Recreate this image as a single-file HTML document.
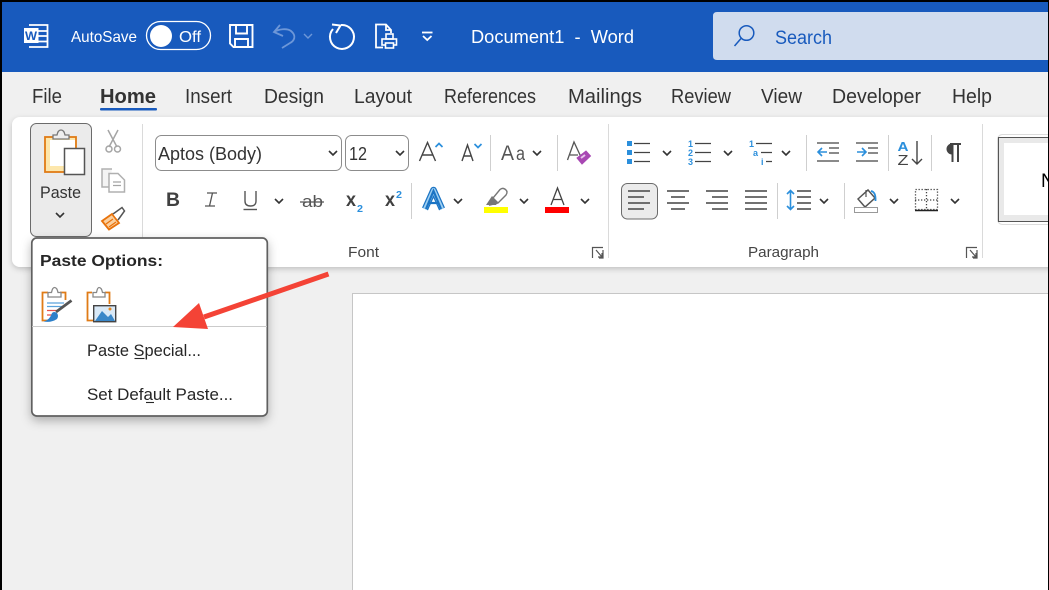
<!DOCTYPE html>
<html><head><meta charset="utf-8"><style>
html,body{margin:0;padding:0;background:#000;width:1049px;height:590px;overflow:hidden}
svg{display:block}
text{font-family:"Liberation Sans",sans-serif;fill:#333}
</style></head><body>
<svg width="1049" height="590" viewBox="0 0 1049 590" xmlns="http://www.w3.org/2000/svg">
<defs>
<filter id="sh" x="-10%" y="-10%" width="120%" height="125%"><feDropShadow dx="0" dy="2" stdDeviation="3" flood-color="#000" flood-opacity=".2"/></filter>
<filter id="sh2" x="-15%" y="-15%" width="130%" height="135%"><feDropShadow dx="0" dy="4" stdDeviation="5" flood-color="#000" flood-opacity=".28"/></filter>
<path id="ch" d="M-4 -2L0 2L4 -2" fill="none" stroke="#333" stroke-width="1.600"/>
</defs>
<rect x="0" y="0" width="1049" height="590" fill="#000"/>
<rect x="2" y="2" width="1046" height="588" fill="#f0f0f0"/>
<rect x="2" y="2" width="1046" height="70" fill="#185abd"/>

<!-- Word icon -->
<path d="M29 25H47.500V47H29" fill="none" stroke="#fff" stroke-width="1.800"/>
<path d="M38 31H47M38 36H47M38 41.500H47" stroke="#fff" stroke-width="1.800"/>
<rect x="24" y="28" width="14.500" height="15" fill="#fff"/>
<text x="25" y="40" font-size="12" font-weight="bold" style="fill:#185abd" textLength="12" lengthAdjust="spacingAndGlyphs">W</text>

<text x="71" y="42" font-size="16" style="fill:#fff" textLength="66" lengthAdjust="spacingAndGlyphs">AutoSave</text>
<rect x="146.500" y="21.500" width="64" height="28" rx="14" fill="none" stroke="#fff" stroke-width="1.300"/>
<circle cx="161" cy="36" r="11" fill="#fff"/>
<text x="179" y="42" font-size="16" style="fill:#fff" textLength="22" lengthAdjust="spacingAndGlyphs">Off</text>

<!-- Save -->
<path d="M230 25H252.500V47H233.500L230 43.500Z" fill="none" stroke="#fff" stroke-width="1.900"/>
<path d="M236 25V33.500H247V25M235 47V39H248V47" fill="none" stroke="#fff" stroke-width="1.900"/>
<!-- Undo -->
<path d="M280 25L274 32L283 36M274 32C279 29 287 28 291 31C297 36 294 41 290 43L282 48" fill="none" stroke="#6d97d8" stroke-width="1.800"/>
<path d="M304 34L308 38L312 34" fill="none" stroke="#6d97d8" stroke-width="1.400"/>
<!-- Redo -->
<path d="M333 29A12 12 0 1 0 341 25" fill="none" stroke="#fff" stroke-width="2"/>
<path d="M332 24.500L340.500 25.500L336 33" fill="none" stroke="#fff" stroke-width="2"/>
<!-- Print preview -->
<path d="M383 47.500H376V24.500H386L391 30V33M386 24.500V30H391" fill="none" stroke="#fff" stroke-width="1.800"/>
<rect x="386" y="34" width="7" height="5" fill="none" stroke="#fff" stroke-width="1.600"/>
<rect x="382" y="39" width="14.500" height="6" fill="none" stroke="#fff" stroke-width="1.600"/>
<rect x="385.500" y="43" width="8" height="5" fill="#185abd" stroke="#fff" stroke-width="1.600"/>
<!-- QAT more -->
<path d="M422 32.500H432.500" stroke="#fff" stroke-width="1.800"/>
<path d="M423 36L427.250 40L431.500 36" fill="none" stroke="#fff" stroke-width="1.800"/>

<text x="471" y="43" font-size="18" style="fill:#fff;white-space:pre" xml:space="preserve" textLength="163" lengthAdjust="spacingAndGlyphs">Document1  -  Word</text>

<!-- Search -->
<path d="M717 12H1048V60H717Q713 60 713 56V16Q713 12 717 12Z" fill="#d0dcee"/>
<circle cx="746.500" cy="33" r="7.300" fill="none" stroke="#185abd" stroke-width="1.500"/>
<path d="M741 38.500L734.500 46" stroke="#185abd" stroke-width="1.500"/>
<text x="775" y="44" font-size="19" style="fill:#185abd" textLength="57" lengthAdjust="spacingAndGlyphs">Search</text>

<!-- Tabs -->
<g font-size="20">
<text x="32" y="103" textLength="30" lengthAdjust="spacingAndGlyphs">File</text>
<text x="100" y="103" font-weight="bold" textLength="56" lengthAdjust="spacingAndGlyphs">Home</text>
<text x="185" y="103" textLength="47" lengthAdjust="spacingAndGlyphs">Insert</text>
<text x="264" y="103" textLength="60" lengthAdjust="spacingAndGlyphs">Design</text>
<text x="354" y="103" textLength="58" lengthAdjust="spacingAndGlyphs">Layout</text>
<text x="444" y="103" textLength="92" lengthAdjust="spacingAndGlyphs">References</text>
<text x="568" y="103" textLength="74" lengthAdjust="spacingAndGlyphs">Mailings</text>
<text x="671" y="103" textLength="60" lengthAdjust="spacingAndGlyphs">Review</text>
<text x="761" y="103" textLength="41" lengthAdjust="spacingAndGlyphs">View</text>
<text x="832" y="103" textLength="89" lengthAdjust="spacingAndGlyphs">Developer</text>
<text x="952" y="103" textLength="40" lengthAdjust="spacingAndGlyphs">Help</text>
</g>
<rect x="100" y="108" width="57" height="2.500" rx="1" fill="#185abd"/>

<!-- Document -->
<rect x="352.500" y="293.500" width="720" height="320" fill="#fff" stroke="#c6c6c6"/>

<!-- Ribbon -->
<rect x="12" y="117" width="1050" height="150" rx="8" fill="#fff" filter="url(#sh)"/>

<!-- Paste button -->
<rect x="30.500" y="123.500" width="61" height="113" rx="6" fill="#ebebeb" stroke="#6b6b6b"/>
<rect x="45" y="137" width="31" height="35" fill="#fde7ac" stroke="#e07b16" stroke-width="1.800"/>
<rect x="50" y="140" width="25" height="26" fill="#fff"/>
<path d="M53 139V135H57Q58 130 61 130Q64 130 65 135H69V139Z" fill="#eee" stroke="#777" stroke-width="1.300"/>
<rect x="64.500" y="148.500" width="20" height="26" fill="#fff" stroke="#555" stroke-width="1.500"/>
<text x="40" y="198" font-size="17" textLength="41" lengthAdjust="spacingAndGlyphs">Paste</text>
<use href="#ch" x="60" y="215"/>
<!-- Cut, copy, painter -->
<path d="M108 130L117 147M118 130L109 147" stroke="#a5a5a5" stroke-width="1.500" fill="none"/>
<circle cx="109" cy="149" r="3" fill="none" stroke="#a5a5a5" stroke-width="1.500"/>
<circle cx="117.500" cy="149" r="3" fill="none" stroke="#a5a5a5" stroke-width="1.500"/>
<path d="M109 187H102V169H112" fill="#f4f4f4" stroke="#b0b0b0" stroke-width="1.500"/>
<path d="M109 173.500H118L124.500 180V192H109Z" fill="#fff" stroke="#b0b0b0" stroke-width="1.500"/>
<path d="M113 182H121M113 185.500H121" stroke="#a5a5a5" stroke-width="1.200"/>
<path d="M102 221L112 214L119 223L109 229.500Z" fill="#fbd0a0" stroke="#e8730c" stroke-width="1.800"/>
<path d="M106 224L113 219M109 227L116 222" stroke="#e8730c" stroke-width="1.200"/>
<path d="M113 214L122 207.500L124.500 211L118 220" fill="#fff" stroke="#555" stroke-width="1.500"/>
<path d="M142.500 124V260" stroke="#dadada"/>

<!-- Font group -->
<rect x="155.500" y="135.500" width="186" height="35" rx="6" fill="#fff" stroke="#8c8c8c"/>
<text x="158" y="160" font-size="18" textLength="104" lengthAdjust="spacingAndGlyphs">Aptos (Body)</text>
<use href="#ch" x="333" y="153"/>
<rect x="345.500" y="135.500" width="63" height="35" rx="6" fill="#fff" stroke="#8c8c8c"/>
<text x="349" y="160" font-size="18" textLength="18" lengthAdjust="spacingAndGlyphs">12</text>
<use href="#ch" x="400" y="153"/>

<path d="M419.500 161L427.500 142.500L435.500 161M422.500 155H432.500" fill="none" stroke="#444" stroke-width="1.400"/>
<path d="M435.500 147L439 143.500L442.500 147" fill="none" stroke="#2b8fdc" stroke-width="1.700"/>
<path d="M462 161L467.500 145L473 161M464 156H471" fill="none" stroke="#444" stroke-width="1.400"/>
<path d="M474.500 144L478 147.500L481.500 144" fill="none" stroke="#2b8fdc" stroke-width="1.700"/>
<path d="M490.500 135V171M557.500 135V171" stroke="#cfcfcf"/>
<text x="501" y="160" font-size="21" style="fill:#555" textLength="13" lengthAdjust="spacingAndGlyphs">A</text>
<text x="516" y="160" font-size="19" style="fill:#555" textLength="9" lengthAdjust="spacingAndGlyphs">a</text>
<use href="#ch" x="537" y="153"/>
<path d="M567.500 160L574 142L580.500 156M570 155H578" fill="none" stroke="#555" stroke-width="1.300"/>
<path d="M577 158L586 151L590.500 156L582 164Z" fill="#a847b3" stroke="#a847b3"/>
<path d="M581 158L585 155" stroke="#e8c5ec" stroke-width="2"/>

<text x="166" y="206" font-size="19" font-weight="bold" style="fill:#404040" textLength="14" lengthAdjust="spacingAndGlyphs">B</text>
<path d="M207 193H217M205 206H215M212.500 193L209.500 206" fill="none" stroke="#555" stroke-width="1.300"/>
<path d="M245 191V201Q245 206 250.500 206Q256 206 256 201V191" fill="none" stroke="#555" stroke-width="1.400"/>
<path d="M243.500 209.500H257" stroke="#555" stroke-width="1.400"/>
<use href="#ch" x="279" y="201"/>
<text x="302" y="207" font-size="17" style="fill:#555" textLength="21" lengthAdjust="spacingAndGlyphs">ab</text>
<path d="M300 202H324" stroke="#555" stroke-width="1.200"/>
<text x="346" y="206" font-size="19" font-weight="bold" style="fill:#404040" textLength="10" lengthAdjust="spacingAndGlyphs">x</text>
<text x="357" y="212" font-size="10" font-weight="bold" style="fill:#2b8fdc" textLength="6" lengthAdjust="spacingAndGlyphs">2</text>
<text x="385" y="206" font-size="19" font-weight="bold" style="fill:#404040" textLength="10" lengthAdjust="spacingAndGlyphs">x</text>
<text x="396" y="198" font-size="10" font-weight="bold" style="fill:#2b8fdc" textLength="6" lengthAdjust="spacingAndGlyphs">2</text>
<path d="M411.500 183V219" stroke="#cfcfcf"/>

<path d="M425 209L433.500 190L442 209" fill="none" stroke="#1b74c4" stroke-width="6.500" stroke-linejoin="round"/>
<path d="M425 209L433.500 190L442 209" fill="none" stroke="#9fd0f2" stroke-width="4" stroke-linejoin="round"/>
<path d="M426 209L433.500 191L441 209M428 203H439" fill="none" stroke="#1b74c4" stroke-width="2.200"/>
<use href="#ch" x="458" y="201"/>
<path d="M490 205L493 198L500 189.500Q503 187 506 190Q508 192 506 195L498 203Z" fill="none" stroke="#777" stroke-width="1.400"/>
<path d="M486 205H496L498 202L492 196Z" fill="#777"/>
<rect x="484" y="207" width="24" height="6" fill="#ffff00"/>
<use href="#ch" x="524" y="201"/>
<path d="M551 205L557.500 188L564 205M553.500 199.500H561.500" fill="none" stroke="#444" stroke-width="1.300"/>
<rect x="545" y="207" width="24" height="6" fill="#ff0000"/>
<use href="#ch" x="585" y="201"/>

<text x="348" y="257" font-size="15" style="fill:#444" textLength="31" lengthAdjust="spacingAndGlyphs">Font</text>
<path d="M592.500 258V247.500H603M603 250V258H599M596 250L602 257M602 253V257H598" fill="none" stroke="#555" stroke-width="1.200"/>
<path d="M608.500 124V258" stroke="#dadada"/>

<!-- Paragraph group -->
<g fill="#2b8fdc"><rect x="627" y="141" width="5" height="5"/><rect x="627" y="150" width="5" height="5"/><rect x="627" y="159" width="5" height="5"/></g>
<path d="M634 143.500H650M634 152.500H650M634 161.500H650" stroke="#444" stroke-width="1.300"/>
<use href="#ch" x="667" y="153"/>
<g font-size="9" font-weight="bold" style="fill:#2b8fdc">
<text x="688" y="147" style="fill:#2b8fdc">1</text><text x="688" y="156" style="fill:#2b8fdc">2</text><text x="688" y="165" style="fill:#2b8fdc">3</text>
<text x="749" y="147" style="fill:#2b8fdc">1</text><text x="753" y="156" style="fill:#2b8fdc">a</text><text x="761" y="165" style="fill:#2b8fdc">i</text>
</g>
<path d="M695 143.500H711M695 152.500H711M695 161.500H711" stroke="#444" stroke-width="1.300"/>
<use href="#ch" x="728" y="153"/>
<path d="M756 143.500H772M761 152.500H772M766 161.500H772" stroke="#444" stroke-width="1.300"/>
<use href="#ch" x="786" y="153"/>
<path d="M806.500 135V171M888.500 135V171M931.500 135V171" stroke="#cfcfcf"/>
<path d="M817 143H839M829 148H839M829 153H839M817 161H839" stroke="#444" stroke-width="1.300"/>
<path d="M827 152H818M822 148L818 152L822 156" fill="none" stroke="#2b8fdc" stroke-width="1.600"/>
<path d="M856 143H878M868 148H878M868 153H878M856 161H878" stroke="#444" stroke-width="1.300"/>
<path d="M857 152H866M862 148L866 152L862 156" fill="none" stroke="#2b8fdc" stroke-width="1.600"/>
<text x="897.500" y="151" font-size="13" font-weight="bold" style="fill:#2b8fdc" textLength="11" lengthAdjust="spacingAndGlyphs">A</text>
<text x="897.500" y="165" font-size="15" style="fill:#444" textLength="11" lengthAdjust="spacingAndGlyphs">Z</text>
<path d="M917 141V164M912 159L917 164L922 159" fill="none" stroke="#444" stroke-width="1.400"/>
<path d="M950 144H961M952.500 144V162M958 144V162" fill="none" stroke="#444" stroke-width="2"/>
<path d="M952 144A5 5 0 0 0 952 154Z" fill="#444" stroke="#444"/>

<rect x="621.500" y="183.500" width="36" height="35.500" rx="6" fill="#ebebeb" stroke="#6b6b6b"/>
<path d="M628 191H650M628 197H644M628 203H650M628 209H644" stroke="#444" stroke-width="1.400"/>
<path d="M667 191H689M671 197H685M667 203H689M671 209H685" stroke="#444" stroke-width="1.400"/>
<path d="M706 191H728M712 197H728M706 203H728M712 209H728" stroke="#444" stroke-width="1.400"/>
<path d="M745 191H767M745 197H767M745 203H767M745 209H767" stroke="#444" stroke-width="1.400"/>
<path d="M777.500 183V219" stroke="#cfcfcf"/>
<path d="M790.500 191V209M787 194L790.500 190.500L794 194M787 206L790.500 209.500L794 206" fill="none" stroke="#2b8fdc" stroke-width="1.600"/>
<path d="M797 191H811M797 197H811M797 203H811M797 209H811" stroke="#444" stroke-width="1.400"/>
<use href="#ch" x="824" y="201"/>
<path d="M844.500 183V219" stroke="#cfcfcf"/>
<path d="M858 199L868 190L875 198L865 207Z" fill="#fff" stroke="#555" stroke-width="1.500"/>
<path d="M866 190V197" stroke="#555" stroke-width="1.200"/>
<path d="M871 191Q876 192 875.500 201" fill="none" stroke="#2b8fdc" stroke-width="1.800"/>
<rect x="854.500" y="207.500" width="23" height="5" fill="#fff" stroke="#999"/>
<use href="#ch" x="894" y="201"/>
<g fill="none" stroke="#444" stroke-width="1.300" stroke-dasharray="1.300 1.700">
<rect x="915.500" y="189.500" width="22" height="20"/><path d="M926.500 189V210M915 200H938"/>
</g>
<path d="M915 210.500H938" stroke="#222" stroke-width="1.500"/>
<use href="#ch" x="955" y="201"/>

<text x="748" y="257" font-size="15" style="fill:#444" textLength="71" lengthAdjust="spacingAndGlyphs">Paragraph</text>
<path d="M966.500 258V247.500H977M977 250V258H973M970 250L976 257M976 253V257H972" fill="none" stroke="#555" stroke-width="1.200"/>
<path d="M982.500 124V258" stroke="#dadada"/>

<!-- Styles gallery -->
<rect x="997.500" y="134.500" width="60" height="90" rx="5" fill="#fff" stroke="#dcdcdc"/>
<rect x="998.500" y="137.500" width="60" height="84" fill="#e9e9e9" stroke="#555"/>
<rect x="1004" y="143" width="50" height="72" fill="#fff"/>
<text x="1041" y="187" font-size="19" style="fill:#000">N</text>

<!-- Right black edge -->
<rect x="1048" y="0" width="1" height="590" fill="#000"/>

<!-- Popup -->
<rect x="31.800" y="238" width="235.500" height="178" rx="5" fill="#fff" stroke="#606060" stroke-width="1.700" filter="url(#sh2)"/>
<text x="40" y="266" font-size="16" font-weight="bold" style="fill:#262626" textLength="123" lengthAdjust="spacingAndGlyphs">Paste Options:</text>
<!-- keep source formatting icon -->
<path d="M48 292.500H42.500V320.500H48M60 292.500H65.500V300" fill="none" stroke="#e07b16" stroke-width="1.800"/>
<path d="M48 297V292.500H51.500Q52.500 287.500 54.500 287.500Q57 287.500 58 292.500H61V297Z" fill="#fff" stroke="#888" stroke-width="1.300"/>
<path d="M47 303H64M47 306.500H62" stroke="#5aa2dc" stroke-width="1.300"/>
<path d="M47 310.500H58M47 315H52" stroke="#e8504a" stroke-width="1.300"/>
<path d="M56 312L71.500 300.500" stroke="#555" stroke-width="2.800"/>
<path d="M43.500 321.500Q50 320 52 313Q54 311 57 313Q59 316 57 319Q51 323 43.500 321.500Z" fill="#2d7fc9"/>
<!-- picture icon -->
<path d="M93 320.500H87.500V292.500H92M105 292.500H109.500V304" fill="none" stroke="#e07b16" stroke-width="1.800"/>
<path d="M93 297V292.500H96.500Q97.500 287.500 99 287.500Q101.500 287.500 102.500 292.500H105V297Z" fill="#fff" stroke="#888" stroke-width="1.300"/>
<rect x="93.700" y="305.700" width="22" height="16" fill="#d9e9f7" stroke="#444" stroke-width="1.400"/>
<path d="M95 321L102 311L108 317L111 314L115 321Z" fill="#3a87c8"/>
<circle cx="110" cy="309" r="1.500" fill="#e8871e"/>

<path d="M32 326.500H267" stroke="#cbcbcb"/>
<text x="87" y="356" font-size="17" style="fill:#262626" textLength="114" lengthAdjust="spacingAndGlyphs">Paste Special...</text>
<path d="M134.500 358.500H144.500" stroke="#262626" stroke-width="1.100"/>
<text x="87" y="400" font-size="17" style="fill:#262626" textLength="146" lengthAdjust="spacingAndGlyphs">Set Default Paste...</text>
<path d="M146 402.500H154" stroke="#262626" stroke-width="1.100"/>

<!-- Arrow -->
<path d="M328.500 274L204 317" stroke="#f44336" stroke-width="5" fill="none"/>
<path d="M173 327L199 303L208 329Z" fill="#f44336"/>
</svg>
</body></html>
